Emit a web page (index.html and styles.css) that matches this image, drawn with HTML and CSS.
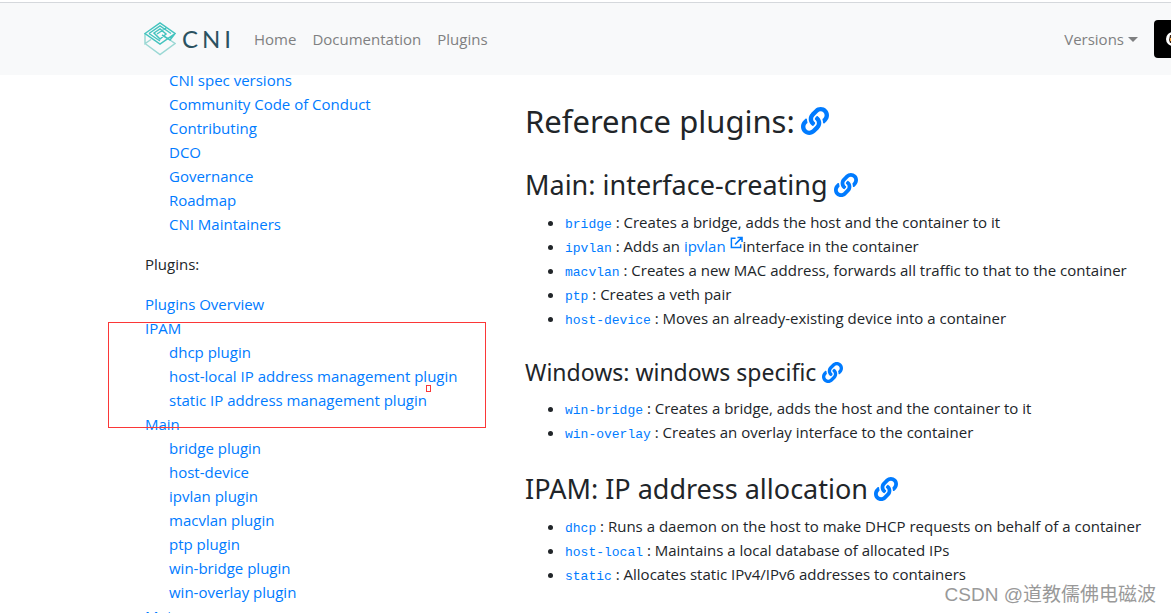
FILE: index.html
```html
<!DOCTYPE html>
<html lang="en">
<head>
<meta charset="utf-8">
<title>CNI</title>
<link rel="stylesheet" href="styles.css">
</head>
<body>
<svg class="defs" aria-hidden="true">
  <symbol id="link" viewBox="0 0 512 512"><path d="M326.612 185.391c59.747 59.809 58.927 155.698.36 214.59-.11.12-.24.25-.36.37l-67.2 67.2c-59.27 59.27-155.699 59.262-214.96 0-59.27-59.26-59.27-155.7 0-214.96l37.106-37.106c9.84-9.84 26.786-3.3 27.294 10.606.648 17.722 3.826 35.527 9.69 52.721 1.986 5.822.567 12.262-3.783 16.612l-13.087 13.087c-28.026 28.026-28.905 73.66-1.155 101.96 28.024 28.579 74.086 28.749 102.325.51l67.2-67.19c28.191-28.191 28.073-73.757 0-101.83-3.701-3.694-7.429-6.564-10.341-8.569a16.037 16.037 0 0 1-6.947-12.606c-.396-10.567 3.348-21.456 11.698-29.806l21.054-21.055c5.521-5.521 14.182-6.199 20.584-1.731a152.482 152.482 0 0 1 20.522 17.197zM467.547 44.449c-59.261-59.262-155.69-59.27-214.96 0l-67.2 67.2c-.12.12-.25.25-.36.37-58.566 58.892-59.387 154.781.36 214.59a152.454 152.454 0 0 0 20.521 17.196c6.402 4.468 15.064 3.789 20.584-1.731l21.054-21.055c8.35-8.35 12.094-19.239 11.698-29.806a16.037 16.037 0 0 0-6.947-12.606c-2.912-2.005-6.64-4.875-10.341-8.569-28.073-28.073-28.191-73.639 0-101.83l67.2-67.19c28.239-28.239 74.3-28.069 102.325.51 27.75 28.3 26.872 73.934-1.155 101.96l-13.087 13.087c-4.35 4.35-5.769 10.79-3.783 16.612 5.864 17.194 9.042 34.999 9.69 52.721.509 13.906 17.454 20.446 27.294 10.606l37.106-37.106c59.271-59.259 59.271-155.699.001-214.959z"/></symbol>
</svg>
<header class="navbar">
  <a class="brand" href="#" aria-label="CNI home">
    <svg class="brand-mark" viewBox="0 0 32 34" fill="none" stroke-width="1.5" aria-hidden="true">
      <path stroke="#9bd8d4" d="M1 21.500 16 32.500 31 21.500 26 18M1 12v9.500l6-4"/>
      <path stroke="#45c4bf" d="M1 11.500 16 1 31 11.500 16 22ZM5 11.500 16 4 27 11.500M5 11.500 16 19M10 11l6-4 6 5-6 5ZM13 12l9-6M31 11.500 26 18 18 13"/>
    </svg>
    <span class="brand-name">CNI</span>
  </a>
  <nav class="nav">
    <a href="#">Home</a>
    <a href="#">Documentation</a>
    <a href="#">Plugins</a>
  </nav>
  <button class="versions" type="button">Versions</button>
  <a class="github" href="#" aria-label="GitHub">
    <svg class="github-mark" viewBox="0 0 14 14" aria-hidden="true">
      <circle cx="7" cy="7" r="7" fill="#fff"/>
      <path fill="#3a2414" d="M4 3h6v8H4L3 8Z"/>
      <path fill="#f0a040" d="M4 6h2v3H4Z"/>
    </svg>
  </a>
</header>
<div class="page">
  <aside class="sidebar">
    <ul class="sub">
      <li><a href="#">CNI spec versions</a></li>
      <li><a href="#">Community Code of Conduct</a></li>
      <li><a href="#">Contributing</a></li>
      <li><a href="#">DCO</a></li>
      <li><a href="#">Governance</a></li>
      <li><a href="#">Roadmap</a></li>
      <li><a href="#">CNI Maintainers</a></li>
    </ul>
    <p class="label">Plugins:</p>
    <ul>
      <li><a href="#">Plugins Overview</a></li>
      <li class="marked"><a href="#">IPAM</a>
        <ul class="sub">
          <li><a href="#">dhcp plugin</a></li>
          <li><a href="#">host-local IP address management plugin</a></li>
          <li><a href="#">static IP address management plugin</a></li>
        </ul>
      </li>
      <li><a href="#">Main</a>
        <ul class="sub">
          <li><a href="#">bridge plugin</a></li>
          <li><a href="#">host-device</a></li>
          <li><a href="#">ipvlan plugin</a></li>
          <li><a href="#">macvlan plugin</a></li>
          <li><a href="#">ptp plugin</a></li>
          <li><a href="#">win-bridge plugin</a></li>
          <li><a href="#">win-overlay plugin</a></li>
        </ul>
      </li>
      <li><a href="#">Meta</a></li>
    </ul>
  </aside>
  <main class="content">
    <h2>Reference plugins: <a href="#" aria-label="Link"><svg class="anchor"><use href="#link"/></svg></a></h2>
    <h3>Main: interface-creating <a href="#" aria-label="Link"><svg class="anchor"><use href="#link"/></svg></a></h3>
    <ul class="list">
      <li><a href="#"><code>bridge</code></a> : Creates a bridge, adds the host and the container to it</li>
      <li><a href="#"><code>ipvlan</code></a> : Adds an <a href="#">ipvlan <svg class="external" viewBox="0 0 14 14" fill="none" stroke="currentColor" stroke-width="1.6" aria-hidden="true"><path d="M6 2.500H1.500v10h10V9M8 1.500h5v5M13 1.500 5.500 9"/></svg></a>interface in the container</li>
      <li><a href="#"><code>macvlan</code></a> : Creates a new MAC address, forwards all traffic to that to the container</li>
      <li><a href="#"><code>ptp</code></a> : Creates a veth pair</li>
      <li><a href="#"><code>host-device</code></a> : Moves an already-existing device into a container</li>
    </ul>
    <h4>Windows: windows specific <a href="#" aria-label="Link"><svg class="anchor"><use href="#link"/></svg></a></h4>
    <ul class="list">
      <li><a href="#"><code>win-bridge</code></a> : Creates a bridge, adds the host and the container to it</li>
      <li><a href="#"><code>win-overlay</code></a> : Creates an overlay interface to the container</li>
    </ul>
    <h3>IPAM: IP address allocation <a href="#" aria-label="Link"><svg class="anchor"><use href="#link"/></svg></a></h3>
    <ul class="list">
      <li><a href="#"><code>dhcp</code></a> : Runs a daemon on the host to make DHCP requests on behalf of a container</li>
      <li><a href="#"><code>host-local</code></a> : Maintains a local database of allocated IPs</li>
      <li><a href="#"><code>static</code></a> : Allocates static IPv4/IPv6 addresses to containers</li>
    </ul>
  </main>
</div>
<div class="watermark">CSDN @道教儒佛电磁波</div>
</body>
</html>
```
FILE: styles.css
```css
*, *::before, *::after { box-sizing: border-box; }
html, body { height: 100%; }
body {
  margin: 0;
  overflow: hidden;
  display: flex;
  flex-direction: column;
  background: #fff;
  color: #212529;
  font: 400 15px/24px "Open Sans", "Noto Sans", sans-serif;
}
a { color: #007bff; text-decoration: none; }
ul { list-style: none; margin: 0; padding: 0; }
.defs { position: absolute; width: 0; height: 0; }
.navbar {
  flex: none;
  display: flex;
  align-items: center;
  height: 73px;
  margin-top: 2px;
  padding-left: 144px;
  overflow: hidden;
  border-top: 1px solid #d5d8dc;
  background: #f8f9fa;
}
.brand { flex: none; display: flex; align-items: center; gap: 6px; width: 94px; }
.brand-mark { flex: none; width: 32px; height: 34px; }
.brand-name { color: #2b5260; font: 400 24px/34px Lato, sans-serif; letter-spacing: 4px; }
.nav { display: flex; gap: 16px; margin-left: 16px; margin-right: auto; }
.nav a, .versions { color: #7f8081; }
.versions {
  display: flex;
  align-items: center;
  gap: 4px;
  padding: 0;
  border: 0;
  background: none;
  font: inherit;
}
.versions::after { content: ""; border: 5px solid transparent; border-top-color: #7f8081; border-bottom: 0; }
.github {
  flex: none;
  display: flex;
  align-items: center;
  width: 17px;
  height: 38px;
  margin-left: 16px;
  padding-left: 12px;
  overflow: hidden;
  border-radius: 4px 0 0 4px;
  background: #000;
}
.github-mark { flex: none; width: 14px; height: 14px; }
.page { flex: 1; min-height: 0; display: flex; gap: 24px; padding-left: 145px; overflow: hidden; }
.sidebar { flex: 0 0 356px; margin-top: -7px; }
.sidebar, .content { min-width: 0; }
.sub { padding-left: 24px; }
.label { margin: 16px 0; }
.marked { position: relative; }
.marked::before {
  content: "";
  position: absolute;
  top: 6px;
  left: -37px;
  width: 378px;
  height: 106px;
  border: 1px solid #fb3737;
  pointer-events: none;
}
.marked::after {
  content: "";
  position: absolute;
  top: 69px;
  left: 281px;
  width: 5px;
  height: 7px;
  border: 1px solid #fb3737;
}
.content { flex: 1; padding-top: 27px; white-space: nowrap; }
h2, h3, h4 { display: flex; align-items: center; gap: 6px; margin: 0 0 8px; font-family: "Noto Sans", sans-serif; font-weight: 400; }
h2 { font-size: 31px; line-height: 38px; }
h3 { margin-top: 28px; font-size: 27px; line-height: 34px; }
h4 { margin-top: 26px; font-size: 23px; line-height: 32px; }
h2 a, h3 a, h4 a { display: flex; }
.anchor { width: 28px; height: 28px; fill: #007bff; }
h3 .anchor { width: 24px; height: 24px; }
h4 .anchor { width: 21px; height: 21px; }
.list { list-style: disc; padding-left: 40px; }
code { font: 400 13px/16px "Liberation Mono", monospace; }
.external { width: 13px; height: 13px; vertical-align: 3px; }
.watermark {
  position: absolute;
  right: 15px;
  bottom: 4px;
  color: #999;
  font: 400 19px/28px "Liberation Sans", "Noto Sans CJK SC", sans-serif;
}
```
